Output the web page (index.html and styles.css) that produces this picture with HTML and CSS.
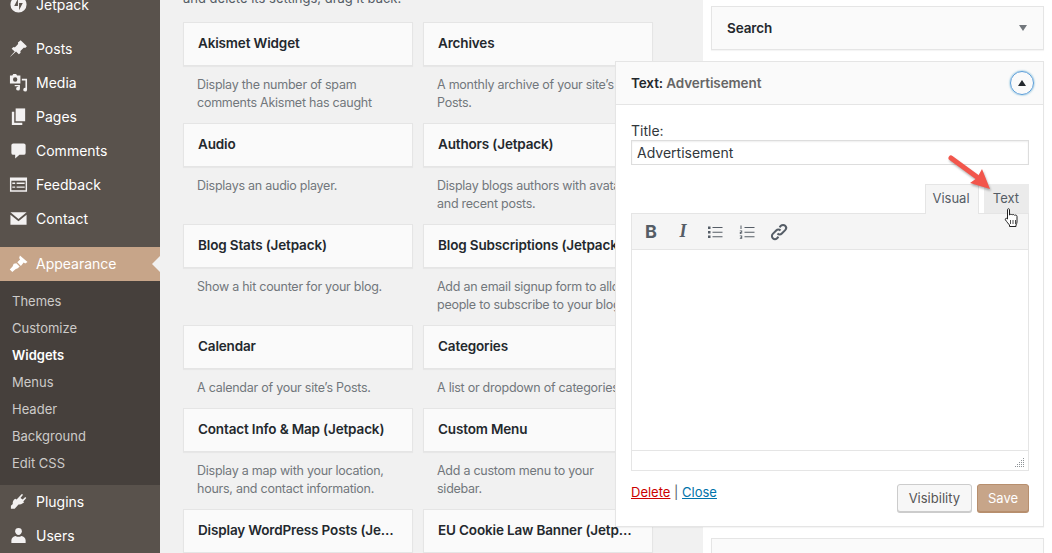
FILE: index.html
```html
<!DOCTYPE html>
<html lang="en">
<head>
    <meta charset="UTF-8">
    <title>Widgets</title>
    <link rel="stylesheet" href="styles.css">
</head>
<body>
    <nav class="sidebar">
        <a class="menu-item menu-item-first">
            <svg viewBox="0 0 20 20"><path fill-rule="evenodd" d="M10 1.500a8.500 8.500 0 1 0 0 17 8.500 8.500 0 0 0 0-17zM9.400 4v7.500H5.500zM10.600 16V8.500h3.900z"/></svg>
            <span>Jetpack</span>
        </a>
        <div class="menu-sep"></div>
        <a class="menu-item">
            <svg viewBox="0 0 20 20"><path d="M10.440 3.020l1.820-1.820 6.560 6.560-1.820 1.820c-.74-.26-1.580-.4-2.010.03l-2.730 2.730c-.44.44-.29 1.270-.03 2.010l-1.820 1.820-3.020-3.020-5.400 5.050L1 18.800l5-5.600-3.220-3.020 1.820-1.820c.74.26 1.570.41 2.010-.03l2.730-2.730c.43-.43.29-1.270.03-2.010z"/></svg>
            <span>Posts</span>
        </a>
        <a class="menu-item">
            <svg viewBox="0 0 20 20"><path fill-rule="evenodd" d="M1 2.500h2.500L4.500 1h3l1 1.500H12V11H1zM6.500 4.500a2.300 2.300 0 1 0 0 4.600 2.300 2.300 0 0 0 0-4.600z"/><path d="M13.500 5H19v11.500a2 2 0 1 1-1.700-2V7h-3.800zM6 11.500h5.500v4a2 2 0 1 1-1.700-2v-.5H6z" transform="translate(0 1)"/></svg>
            <span>Media</span>
        </a>
        <a class="menu-item">
            <svg viewBox="0 0 20 20"><path d="M7 1.500h10v13.500H7z"/><path d="M3 5h2.500v11.500H14V19H3z"/></svg>
            <span>Pages</span>
        </a>
        <a class="menu-item">
            <svg viewBox="0 0 20 20"><path d="M4.500 2.500h11a2 2 0 0 1 2 2v8a2 2 0 0 1-2 2H11l-4.500 4v-4h-2a2 2 0 0 1-2-2v-8a2 2 0 0 1 2-2z"/></svg>
            <span>Comments</span>
        </a>
        <a class="menu-item">
            <svg viewBox="0 0 20 20"><path fill-rule="evenodd" d="M1 2.500h18v15H1zM2.500 6v10h15V6zM3.500 8h3v1.500h-3zM8 8h8.500v1.500H8zM3.500 12h3v1.500h-3zM8 12h8.500v1.500H8z"/></svg>
            <span>Feedback</span>
        </a>
        <a class="menu-item">
            <svg viewBox="0 0 20 20"><path d="M1.500 3.500h17L10 10.500zM1.500 6l8.500 7 8.500-7v10.500h-17z"/></svg>
            <span>Contact</span>
        </a>
        <div class="menu-sep"></div>
        <a class="menu-item menu-item-current">
            <svg viewBox="0 0 20 20"><path d="M11.500 1.500l8 7-2.500 1.500-1.500-1-3 3.500-3.800-3.800 3-3-1-1.500zM7.800 9.800l3.400 3.400-1.700 1.500c-1 .8-2 .6-3 1.600L3.500 19 .8 16.300l2.700-3c1-1 .7-2 1.500-3z"/></svg>
            <span>Appearance</span>
        </a>
        <div class="submenu">
            <a>Themes</a>
            <a>Customize</a>
            <a class="submenu-current">Widgets</a>
            <a>Menus</a>
            <a>Header</a>
            <a>Background</a>
            <a>Edit CSS</a>
        </div>
        <a class="menu-item">
            <svg viewBox="0 0 20 20"><path d="M13.500 2l1.300 1-2.700 3.300 2.300 1.700 2.700-2.800 1.100 1.100-3.200 3.600 1 1-1.500 1c-1.500 1-3 1.500-4.500 1.200L6 17.500H2v-3l2-2c-.3-1.500.2-3 1.200-4.300L6.500 7l1.500 1z"/></svg>
            <span>Plugins</span>
        </a>
        <a class="menu-item">
            <svg viewBox="0 0 20 20"><path d="M10 2a3.500 3.500 0 0 1 3.500 3.500c0 2-1.500 4-3.500 4S6.500 7.500 6.500 5.500A3.500 3.500 0 0 1 10 2z"/><path d="M7 10.500c1.700 1.200 4.300 1.200 6 0 2.500.5 4.500 2.500 4.500 4.500v3h-15v-3c0-2 2-4 4.500-4.500z"/></svg>
            <span>Users</span>
        </a>
    </nav>

    <main class="available">
        <p class="available-note">and delete its settings, drag it back.</p>
        <div class="widget-grid">
            <div class="widget-item">
                <div class="widget-title">Akismet Widget</div>
                <p class="widget-desc">Display the number of spam comments Akismet has caught</p>
            </div>
            <div class="widget-item">
                <div class="widget-title">Archives</div>
                <p class="widget-desc">A monthly archive of your site’s Posts.</p>
            </div>
            <div class="widget-item">
                <div class="widget-title">Audio</div>
                <p class="widget-desc">Displays an audio player.</p>
            </div>
            <div class="widget-item">
                <div class="widget-title">Authors (Jetpack)</div>
                <p class="widget-desc">Display blogs authors with avatars and recent posts.</p>
            </div>
            <div class="widget-item">
                <div class="widget-title">Blog Stats (Jetpack)</div>
                <p class="widget-desc">Show a hit counter for your blog.</p>
            </div>
            <div class="widget-item">
                <div class="widget-title">Blog Subscriptions (Jetpack)</div>
                <p class="widget-desc">Add an email signup form to allow people to subscribe to your blog.</p>
            </div>
            <div class="widget-item">
                <div class="widget-title">Calendar</div>
                <p class="widget-desc">A calendar of your site’s Posts.</p>
            </div>
            <div class="widget-item">
                <div class="widget-title">Categories</div>
                <p class="widget-desc">A list or dropdown of categories.</p>
            </div>
            <div class="widget-item">
                <div class="widget-title">Contact Info &amp; Map (Jetpack)</div>
                <p class="widget-desc">Display a map with your location, hours, and contact information.</p>
            </div>
            <div class="widget-item">
                <div class="widget-title">Custom Menu</div>
                <p class="widget-desc">Add a custom menu to your sidebar.</p>
            </div>
            <div class="widget-item">
                <div class="widget-title">Display WordPress Posts (Jetpack)</div>
            </div>
            <div class="widget-item">
                <div class="widget-title">EU Cookie Law Banner (Jetpack)</div>
            </div>
        </div>
    </main>

    <aside class="sidebars">
        <div class="area-box">
            <span class="area-name">Search</span>
            <span class="arrow-down"></span>
        </div>

        <section class="text-widget">
            <header class="text-widget-head">
                <span class="head-title"><b>Text:</b> Advertisement</span>
                <span class="toggle"><span class="arrow-up"></span></span>
            </header>
            <div class="text-widget-body">
                <label class="title-label" for="title">Title:</label>
                <input class="title-input" id="title" type="text" value="Advertisement">

                <div class="tabs">
                    <span class="tab tab-active">Visual</span>
                    <span class="tab">Text</span>
                </div>
                <div class="editor">
                    <div class="toolbar">
                        <span class="tool tool-bold">B</span>
                        <span class="tool tool-italic">I</span>
                        <span class="tool">
                            <svg viewBox="0 0 20 20"><path d="M3 4.500h2.500V7H3zM3 9h2.500v2.500H3zM3 13.500h2.500V16H3z"/><path d="M7.500 5h10v1h-10zM7.500 9.700h10v1h-10zM7.500 14.200h10v1h-10z"/></svg>
                        </span>
                        <span class="tool">
                            <svg viewBox="0 0 20 20"><path d="M7.500 5h10v1h-10zM7.500 9.700h10v1h-10zM7.500 14.200h10v1h-10z"/><path d="M3.500 3.500h1v3.400h-1zM2.800 8.500h2.400v2.200H3.800v.7h1.400v.7H2.800V10h1.400v-.8H2.800zM2.800 13.500h2.400v3.300H2.800v-.7h1.400v-.6H3v-.6h1.200v-.7H2.800z"/></svg>
                        </span>
                        <span class="tool">
                            <svg viewBox="0 0 20 20"><path fill="none" stroke="#555d66" stroke-width="2" d="M8.500 11.500a3 3 0 0 0 4.300 0l3.400-3.400a3 3 0 0 0-4.300-4.300l-1.400 1.400M11.500 8.500a3 3 0 0 0-4.300 0l-3.400 3.400a3 3 0 0 0 4.300 4.300l1.400-1.400"/></svg>
                        </span>
                    </div>
                    <div class="editor-area"></div>
                    <div class="editor-status">
                        <svg class="resize-handle" viewBox="0 0 10 9"><path d="M8 0h1v1H8zM6 2h1v1H6zM8 2h1v1H8zM4 4h1v1H4zM6 4h1v1H6zM8 4h1v1H8zM2 6h1v1H2zM4 6h1v1H4zM6 6h1v1H6zM8 6h1v1H8zM0 8h1v1H0zM2 8h1v1H2zM4 8h1v1H4zM6 8h1v1H6zM8 8h1v1H8z"/></svg>
                    </div>
                </div>

                <div class="widget-actions">
                    <div class="widget-links"><a class="link-delete">Delete</a> | <a class="link-close">Close</a></div>
                    <div class="widget-buttons">
                        <button class="btn" type="button">Visibility</button>
                        <button class="btn btn-save" type="button">Save</button>
                    </div>
                </div>
            </div>
        </section>

        <div class="area-box"></div>
    </aside>

    <!-- annotation and cursor drawn on top of the screenshot -->
    <svg class="annotation" viewBox="0 0 50 42">
        <path fill="none" stroke="#f2564c" stroke-width="5" stroke-linecap="round" d="M6 6l26 19"/>
        <path fill="#f2564c" d="M45 37L25 31l7-5 5-9z"/>
    </svg>
    <svg class="hand" viewBox="1 0 14 19">
        <path fill="#fff" stroke="#222" stroke-width="1" stroke-linejoin="round" d="M4 1.500c0-1 2-1 2 0v5.500c1-1 2-.8 2.500 0 .8-.8 2-.6 2.500.3 1-.6 2.500-.2 2.500 1.200V14c0 1-.5 2-1 3v1.500H6V17c-1-1-2.500-3-4-5-.8-1.200.7-2.500 2-1z"/>
        <path fill="none" stroke="#222" stroke-width=".8" d="M7 12v4M9.500 12v4M12 12v4"/>
    </svg>
</body>
</html>
```

FILE: styles.css
```css
* {
    box-sizing: border-box;
}
html, body {
    height: 553px;
    overflow: hidden;
}
body {
    margin: 0;
    display: flex;
    font-family: Inter, "Open Sans", sans-serif;
    font-size: 13px;
    color: #23282d;
    background-color: #f1f1f1;
}

/* left admin menu */
.sidebar {
    flex: 0 0 160px;
    margin-top: -12px;
    background-color: #59524c;
    color: #fff;
    font-size: 14px;
}
.menu-item {
    position: relative;
    display: flex;
    align-items: center;
    height: 34px;
    padding: 0 0 2px 9px;
}
.menu-item svg {
    flex: 0 0 19px;
    width: 19px;
    height: 19px;
    margin-right: 8px;
    fill: #f3f1f1;
}
.menu-sep {
    height: 10px;
}
.menu-sep + .menu-item-current {
    margin-top: 1px;
}
.menu-item-current {
    background-color: #c7a589;
}
.menu-item-current svg {
    fill: #fff;
}
.menu-item-current::after {
    content: "";
    position: absolute;
    right: 0;
    top: 9px;
    border: 8px solid transparent;
    border-right-color: #f1f1f1;
}
.submenu {
    display: flex;
    flex-direction: column;
    padding: 7px 0 8px 12px;
    background-color: #46403c;
    color: #cdcbc9;
}
.submenu a {
    height: 27px;
    line-height: 27px;
    font-size: 13px;
}
.submenu .submenu-current {
    color: #fff;
    font-weight: 600;
}

/* available widgets */
.available {
    flex: 0 0 543px;
    margin-top: -11px;
    padding-left: 23px;
}
.available-note {
    margin: 0 0 15px;
    line-height: 18px;
    color: #555d66;
}
.widget-grid {
    display: grid;
    grid-template-columns: 229.5px 229.5px;
    column-gap: 10.5px;
}
.widget-item {
    padding-bottom: 11px;
    min-width: 0;
}
.widget-title {
    height: 44px;
    padding: 0 14px;
    line-height: 40px;
    font-size: 13.5px;
    letter-spacing: -0.15px;
    font-weight: 600;
    white-space: nowrap;
    overflow: hidden;
    text-overflow: ellipsis;
    background-color: #fafafa;
    border: 1px solid #e5e5e5;
    box-shadow: 0 1px 1px rgba(0,0,0,0.04);
}
.widget-desc {
    margin: 10px 0 0;
    padding: 0 15px 0 14px;
    line-height: 18px;
    font-size: 12.5px;
    letter-spacing: -0.25px;
    color: #72777c;
}

/* widget areas on the right */
.sidebars {
    flex: 0 0 349px;
    padding: 6px 8px 0;
    background-color: #fff;
}
.area-box {
    display: flex;
    align-items: center;
    justify-content: space-between;
    height: 44px;
    padding: 0 16px 0 15px;
    margin-bottom: 11px;
    background-color: #fafafa;
    border: 1px solid #e5e5e5;
    box-shadow: 0 1px 1px rgba(0,0,0,0.04);
}
.area-name {
    font-size: 13.5px;
    letter-spacing: -0.1px;
    font-weight: 600;
}
.arrow-down {
    border: 4.500px solid transparent;
    border-top: 6px solid #72777c;
    border-bottom: 0;
}
.text-widget {
    width: 429px;
    height: 466px;
    margin: 0 0 11px -96px;
    background-color: #fff;
    border: 1px solid #e5e5e5;
    box-shadow: 0 1px 1px rgba(0,0,0,0.04);
}
.text-widget-head {
    display: flex;
    align-items: center;
    justify-content: space-between;
    height: 43px;
    padding: 0 9px 0 15px;
    background-color: #fafafa;
    border-bottom: 1px solid #e5e5e5;
    font-size: 13.5px;
    letter-spacing: -0.1px;
    font-weight: 600;
    color: #666;
}
.head-title b {
    font-weight: 600;
    color: #23282d;
}
.toggle {
    display: flex;
    align-items: center;
    justify-content: center;
    width: 24px;
    height: 24px;
    border: 1.5px solid #5b9dd9;
    border-radius: 50%;
    box-shadow: 0 0 2px rgba(30,140,190,0.8);
}
.arrow-up {
    border: 4.500px solid transparent;
    border-bottom: 6px solid #23282d;
    border-top: 0;
}
.text-widget-body {
    padding: 17px 14px 0 15px;
}
.title-label {
    display: block;
    line-height: 18px;
    font-size: 14px;
    color: #32373c;
}
.title-input {
    display: block;
    width: 100%;
    height: 25px;
    padding: 0 5px;
    border: 1px solid #ddd;
    font-family: inherit;
    font-size: 14px;
    color: #32373c;
    box-shadow: inset 0 1px 2px rgba(0,0,0,0.07);
}
.tabs {
    display: flex;
    align-items: flex-start;
    justify-content: flex-end;
    gap: 5px;
    margin-top: 19px;
    height: 29px;
}
.tab {
    width: 45px;
    height: 29px;
    padding-right: 1px;
    text-align: center;
    line-height: 27px;
    color: #555d66;
    background-color: #ebebeb;
    border: 1px solid #ebebeb;
    border-bottom: 0;
}
.tab-active {
    position: relative;
    width: 54px;
    height: 30px;
    padding-right: 2px;
    background-color: #f5f5f5;
    border-color: #e5e5e5;
}
.editor {
    border: 1px solid #e5e5e5;
    background-color: #fff;
}
.toolbar {
    display: flex;
    align-items: center;
    height: 36px;
    padding-left: 5px;
    gap: 4px;
    background-color: #f5f5f5;
    border-bottom: 1px solid #e5e5e5;
}
.tool {
    display: flex;
    align-items: center;
    justify-content: center;
    width: 28px;
    height: 28px;
    font-size: 18px;
    color: #555d66;
}
.tool svg {
    width: 20px;
    height: 20px;
    fill: #555d66;
}
.tool-bold {
    font-weight: 700;
}
.tool-italic {
    font-style: italic;
    font-weight: 700;
    font-family: "Liberation Serif", serif;
}
.editor-area {
    height: 200px;
}
.editor-status {
    display: flex;
    align-items: flex-end;
    justify-content: flex-end;
    height: 20px;
    padding: 0 3px 3px 0;
    border-top: 1px solid #e5e5e5;
}
.resize-handle {
    width: 10px;
    height: 9px;
    fill: #8d9296;
}
.widget-actions {
    display: flex;
    justify-content: space-between;
    margin-top: 13px;
}
.widget-links {
    line-height: 16px;
    color: #555d66;
}
.link-delete {
    color: #c00;
    text-decoration: underline;
}
.link-close {
    color: #0073aa;
    text-decoration: underline;
}
.widget-buttons {
    display: flex;
    gap: 5px;
}
.btn {
    height: 28px;
    padding: 0 11px;
    font-family: inherit;
    font-size: 13px;
    color: #555;
    background: #f7f7f7;
    border: 1px solid #ccc;
    border-radius: 3px;
    box-shadow: 0 1px 0 #ccc;
}
.btn-save {
    width: 52px;
    padding: 0;
    color: #fff;
    background: #c7a589;
    border-color: #b78f6e;
    box-shadow: 0 1px 0 #b78f6e;
}

/* overlays */
.annotation {
    position: absolute;
    left: 945px;
    top: 152px;
    width: 50px;
    height: 42px;
    filter: drop-shadow(1px 2px 1px rgba(0,0,0,0.3));
}
.hand {
    position: absolute;
    left: 1004px;
    top: 208px;
    width: 15px;
    height: 19px;
}
```
